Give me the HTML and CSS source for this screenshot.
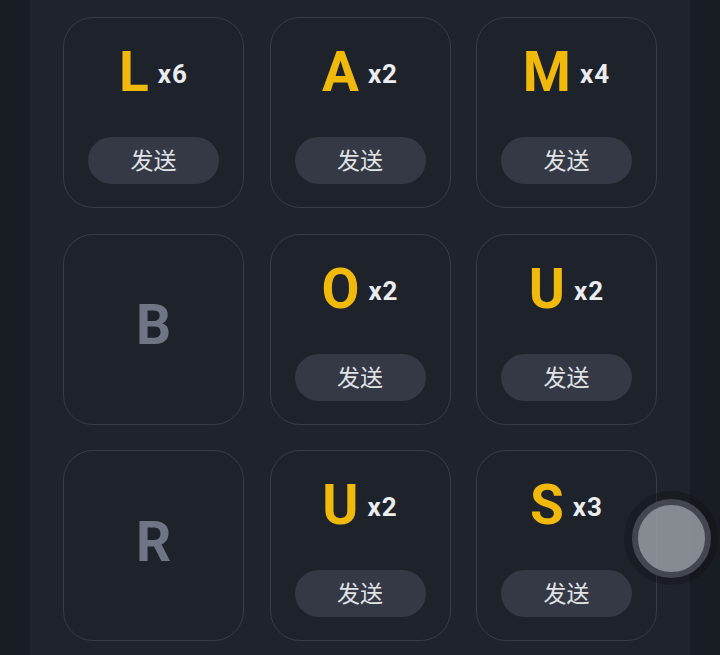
FILE: index.html
```html
<!DOCTYPE html>
<html lang="zh">
<head>
<meta charset="utf-8">
<link rel="stylesheet" href="styles.css">
</head>
<body>
<main class="panel">
  <div class="grid">
    <div class="card"><div class="title"><span class="letter">L</span><span class="count">x6</span></div><button class="send">发送</button></div>
    <div class="card"><div class="title"><span class="letter">A</span><span class="count">x2</span></div><button class="send">发送</button></div>
    <div class="card"><div class="title"><span class="letter">M</span><span class="count">x4</span></div><button class="send">发送</button></div>
    <div class="card empty"><span class="letter muted">B</span></div>
    <div class="card"><div class="title"><span class="letter">O</span><span class="count">x2</span></div><button class="send">发送</button></div>
    <div class="card"><div class="title"><span class="letter">U</span><span class="count">x2</span></div><button class="send">发送</button></div>
    <div class="card empty"><span class="letter muted">R</span></div>
    <div class="card"><div class="title"><span class="letter">U</span><span class="count">x2</span></div><button class="send">发送</button></div>
    <div class="card"><div class="title"><span class="letter">S</span><span class="count">x3</span></div><button class="send">发送</button></div>
  </div>
</main>
<div class="fab"><div class="fab-inner"></div></div>
</body>
</html>
```

FILE: styles.css
```css
html, body {
  margin: 0;
  padding: 0;
  height: 100%;
  overflow: hidden;
}
body {
  background: #181c23;
  font-family: Roboto, "Noto Sans CJK SC", sans-serif;
}
.panel {
  margin: 0 30px;
  background: #1f232c;
  min-height: 655px;
  padding: 17px 33px 0 33px;
  box-sizing: border-box;
}
.grid {
  display: grid;
  grid-template-columns: repeat(3, 181px);
  grid-auto-rows: 191px;
  column-gap: 25.5px;
  row-gap: 25.5px;
}
.card {
  box-sizing: border-box;
  border: 1.5px solid #373c48;
  border-radius: 30px;
  background: #1e222b;
  display: flex;
  flex-direction: column;
  align-items: center;
  padding-top: 26px;
}
.card.empty {
  justify-content: center;
  padding: 0 0 8px 0;
}
.title {
  display: flex;
  align-items: center;
  height: 56px;
}
.letter {
  font-size: 55px;
  line-height: 56px;
  font-weight: 700;
  color: #f0b90b;
}
.letter.muted {
  color: #6f7585;
}
.count {
  margin-left: 9px;
  font-size: 26px;
  letter-spacing: 1px;
  font-weight: 700;
  color: #eaecef;
  margin-top: 4px;
}
.send {
  margin-top: 37px;
  width: 131px;
  height: 47px;
  border: none;
  border-radius: 24px;
  background: #343945;
  color: #e1e3e7;
  font-family: "Noto Sans CJK SC", sans-serif;
  font-size: 23px;
  padding: 0 0 3px 0;
  line-height: 44px;
}
.fab {
  position: fixed;
  left: 624px;
  top: 491px;
  width: 94px;
  height: 94px;
  border-radius: 50%;
  background: rgba(14, 16, 20, 0.35);
  display: flex;
  align-items: center;
  justify-content: center;
}
.fab-inner {
  width: 67px;
  height: 67px;
  border-radius: 50%;
  background: rgba(160, 163, 170, 0.82);
  border: 6px solid #42464e;
}
```
